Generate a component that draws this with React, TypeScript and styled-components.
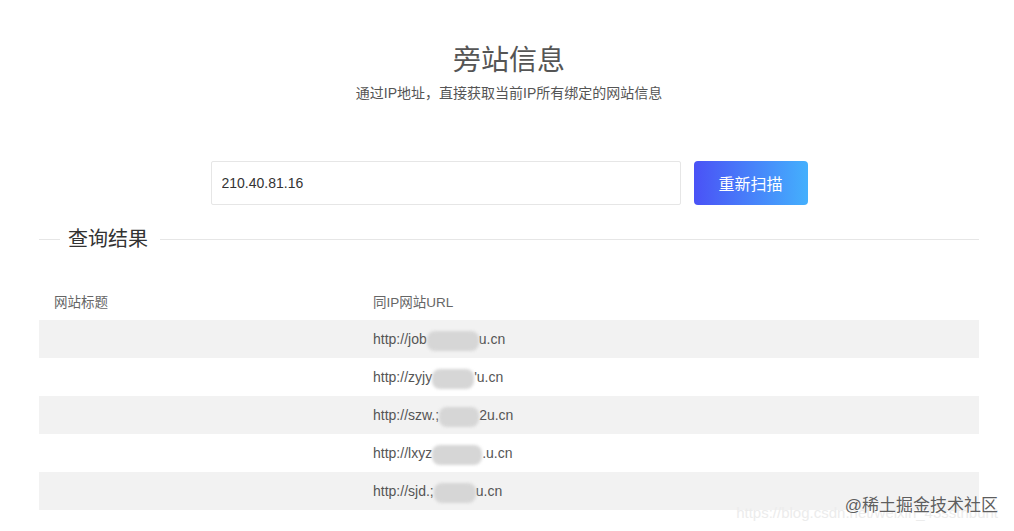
import React from 'react';
import styled, {createGlobalStyle} from 'styled-components'

const GlobalStyle = createGlobalStyle`
    html, body {
        margin:0;
        padding:0;
        background:#fff;
        font-family: "Liberation Sans", "Noto Sans CJK SC", sans-serif;
    }
`

interface SiteRow{
    head:string;
    tail:string;
    blur:number;
}

const rows:SiteRow[] = [
    {head:"http://job", tail:"u.cn", blur:52},
    {head:"http://zyjy", tail:"'u.cn", blur:42},
    {head:"http://szw.;", tail:"2u.cn", blur:40},
    {head:"http://lxyz", tail:".u.cn", blur:50},
    {head:"http://sjd.;", tail:"u.cn", blur:42},
]

const App = () => {
    return (
    <>
    <GlobalStyle/>
    <Page>
        <Header>
            <Title>旁站信息</Title>
            <SubTitle>通过IP地址，直接获取当前IP所有绑定的网站信息</SubTitle>
        </Header>
        <SearchRow>
            <IpInput defaultValue="210.40.81.16"/>
            <ScanButton>重新扫描</ScanButton>
        </SearchRow>
        <Legend>
            <LegendLine short/>
            <LegendText>查询结果</LegendText>
            <LegendLine/>
        </Legend>
        <Table>
            <HeadRow>
                <Cell>网站标题</Cell>
                <Cell>同IP网站URL</Cell>
            </HeadRow>
            {rows.map((r, i) => (
                <BodyRow key={i} striped={i % 2 === 0}>
                    <Cell></Cell>
                    <Cell>
                        {r.head}<Blur style={{width: r.blur}}/>{r.tail}
                    </Cell>
                </BodyRow>
            ))}
        </Table>
    </Page>
    <Watermark>
        <WatermarkUrl>https://blog.csdn.net/weixin_43ssthbunt</WatermarkUrl>
        <WatermarkText>@稀土掘金技术社区</WatermarkText>
    </Watermark>
    </>
    )
}

const Page = styled.div`
    width:940px;
    margin-left:39px;
    height:531px;
    overflow:hidden;
`

const Header = styled.div`
    display:flex;
    flex-direction:column;
    align-items:center;
    padding-top:42px;
`

const Title = styled.h1`
    margin:0;
    font-size:28px;
    font-weight:400;
    color:#555;
    line-height:38px;
`

const SubTitle = styled.p`
    margin:4px 0 0;
    font-size:14px;
    color:#555;
    line-height:18px;
`

const SearchRow = styled.div`
    display:flex;
    justify-content:center;
    gap:13px;
    margin-top:59px;
`

const IpInput = styled.input`
    box-sizing:border-box;
    width:470px;
    height:44px;
    border:1px solid #e6e6e6;
    border-radius:2px;
    padding:0 10px;
    font-family:"Liberation Sans", "Noto Sans CJK SC", sans-serif;
    font-size:14px;
    color:#333;
    outline:none;
`

const ScanButton = styled.button`
    width:114px;
    height:44px;
    border:none;
    border-radius:4px;
    background:linear-gradient(90deg, #4a52f6 0%, #44b0fd 100%);
    color:#fff;
    font-family:"Liberation Sans", "Noto Sans CJK SC", sans-serif;
    font-size:16px;
    cursor:pointer;
`

const Legend = styled.div`
    display:flex;
    align-items:center;
    margin-top:20px;
    height:28px;
`

const LegendLine = styled.div<{short?:boolean}>`
    height:1px;
    background:#e6e6e6;
    ${(props) => (props.short ? 'width:21px;' : 'flex:1;')}
`

const LegendText = styled.span`
    font-size:20px;
    color:#333;
    padding:0 12px 0 8px;
    line-height:28px;
`

const Table = styled.div`
    margin-top:29px;
`

const HeadRow = styled.div`
    display:grid;
    grid-template-columns:319px 1fr;
    height:38px;
    align-items:center;
    font-size:13.5px;
    color:#666;
`

const BodyRow = styled.div<{striped:boolean}>`
    display:grid;
    grid-template-columns:319px 1fr;
    height:38px;
    align-items:center;
    font-size:14px;
    color:#555;
    background:${(props) => (props.striped ? '#f2f2f2' : '#fff')};
`

const Cell = styled.div`
    padding:0 15px;
    display:flex;
    align-items:center;
    white-space:nowrap;
`

const Blur = styled.span`
    display:inline-block;
    height:20px;
    margin-top:4px;
    border-radius:8px;
    background:#d6d6d6;
    filter:blur(1.5px);
`

const Watermark = styled.div`
    position:absolute;
    right:10px;
    top:490px;
    width:240px;
    height:36px;
`

const WatermarkUrl = styled.div`
    position:absolute;
    right:6px;
    top:14px;
    font-size:15px;
    color:#ececec;
    white-space:nowrap;
`

const WatermarkText = styled.div`
    position:absolute;
    right:6px;
    top:1px;
    font-size:17px;
    color:#5e5e5e;
    white-space:nowrap;
    text-shadow:0 0 1px #fff;
`

export default App
